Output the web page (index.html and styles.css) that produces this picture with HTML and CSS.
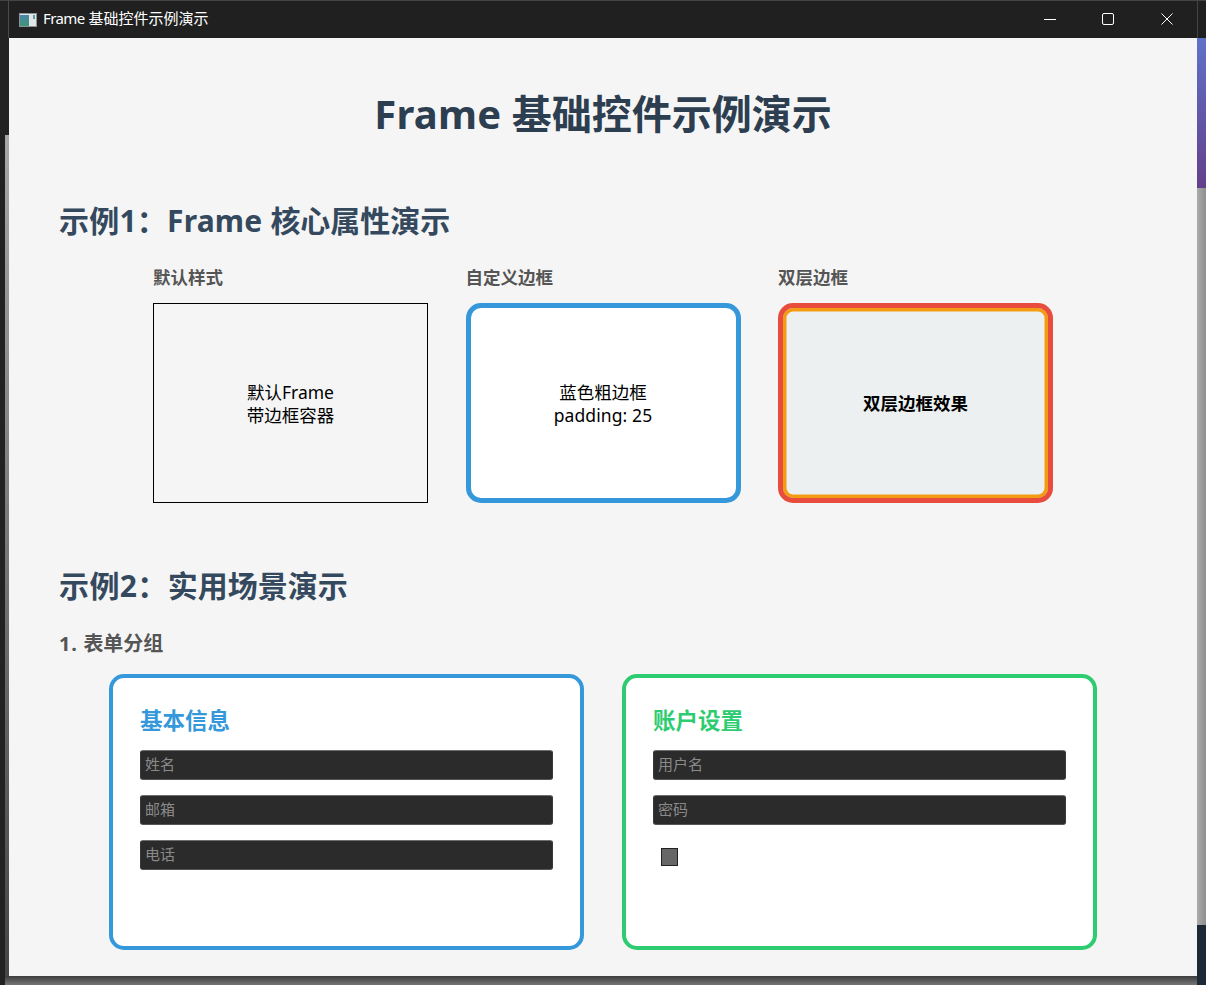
FILE: index.html
```html
<!DOCTYPE html>
<html lang="zh-CN">
<head>
<meta charset="utf-8">
<title>Frame 基础控件示例演示</title>
<link rel="stylesheet" href="styles.css">
</head>
<body>
<div class="window">
  <header class="titlebar">
    <svg class="app-icon" width="18" height="14" viewBox="0 0 18 14">
      <defs>
        <linearGradient id="appfill" x1="0" y1="0" x2="0" y2="1">
          <stop offset="0" stop-color="#4a86a8"/>
          <stop offset="1" stop-color="#3f9478"/>
        </linearGradient>
      </defs>
      <rect x="0.5" y="0.5" width="17" height="13" fill="#e2e6e8" stroke="#8d9296"/>
      <rect x="1" y="2" width="9" height="11" fill="url(#appfill)"/>
      <rect x="14" y="2" width="2" height="4" fill="#5f9ea0"/>
    </svg>
    <span class="title-text"><span class="tight">Frame</span> 基础控件示例演示</span>
    <div class="win-controls">
      <span class="win-btn"><svg width="12" height="12" viewBox="0 0 12 12"><path d="M0 6.5H12" stroke="#fff" fill="none"/></svg></span>
      <span class="win-btn nudge-btn"><svg width="12" height="12" viewBox="0 0 12 12"><rect x="0.5" y="0.5" width="11" height="11" rx="1.5" stroke="#fff" fill="none"/></svg></span>
      <span class="win-btn nudge-btn"><svg width="12" height="12" viewBox="0 0 12 12"><path d="M0.5 0.5L11.5 11.5M11.5 0.5L0.5 11.5" stroke="#fff" fill="none"/></svg></span>
    </div>
  </header>
  <main class="content">
    <h1 class="page-title"><span class="wide-2">Frame</span> 基础控件示例演示</h1>

    <h2 class="section-title first"><span class="wide-2">示例1：Frame </span>核心属性演示</h2>
    <div class="demo-row">
      <div class="demo-col">
        <div class="demo-label">默认样式</div>
        <div class="frame frame-default"><span class="frame-text">默认Frame<br>带边框容器</span></div>
      </div>
      <div class="demo-col">
        <div class="demo-label">自定义边框</div>
        <div class="frame frame-blue"><span class="frame-text">蓝色粗边框<br><span class="wide-1">padding: 25</span></span></div>
      </div>
      <div class="demo-col">
        <div class="demo-label">双层边框</div>
        <div class="frame frame-double">双层边框效果</div>
      </div>
    </div>

    <h2 class="section-title second"><span class="wide-4">示例2：</span>实用场景演示</h2>
    <h3 class="sub-title"><span class="wide-7">1. </span>表单分组</h3>
    <div class="form-row">
      <section class="form-card card-blue">
        <h4 class="card-title">基本信息</h4>
        <input class="field" placeholder="姓名">
        <input class="field" placeholder="邮箱">
        <input class="field" placeholder="电话">
      </section>
      <section class="form-card card-green">
        <h4 class="card-title">账户设置</h4>
        <input class="field" placeholder="用户名">
        <input class="field" placeholder="密码">
        <input class="check" type="checkbox">
      </section>
    </div>
  </main>
</div>
</body>
</html>
```
FILE: styles.css
```css
* { box-sizing: border-box; }
html, body { margin: 0; height: 985px; overflow: hidden; }
body {
  width: 1206px;
  padding: 1px 9px 9px 9px;
  font-family: "Noto Sans", "Noto Sans CJK SC", sans-serif;
  background:
    linear-gradient(#444, #444) 0 0 / 100% 1px no-repeat,
    linear-gradient(#4a4a4a, #4a4a4a) 8px 0 / 1px 38px no-repeat,
    linear-gradient(#444, #444) 1197px 0 / 1px 38px no-repeat,
    linear-gradient(180deg, #5f72c8 0, #643f8c 100%) 1197px 38px / 9px 150px no-repeat,
    linear-gradient(#1c2a38, #1c2a38) 1197px 925px / 9px 60px no-repeat,
    linear-gradient(90deg, #ababab, #8e8e8e) 1197px 188px / 9px 737px no-repeat,
    linear-gradient(#202020, #202020) 1197px 0 / 9px 38px no-repeat,
    linear-gradient(180deg, #3c3c3c, #767676) 5px 976px / 100% 9px no-repeat,
    linear-gradient(#a8a8a8, #444) 5px 135px / 4px 850px no-repeat,
    #222;
}
.window {
  width: 1188px;
  height: 975px;
  background: #f5f5f5;
  overflow: hidden;
}
.titlebar {
  height: 37px;
  background: #202020;
  display: flex;
  align-items: center;
  padding-left: 10px;
  color: #fff;
}
.app-icon { flex: none; }
.title-text { margin-left: 6px; margin-bottom: 3px; font-size: 15px; line-height: 20px; }
.tight { letter-spacing: -0.6px; }
.wide-1 { letter-spacing: 0.1px; }
.wide-2 { letter-spacing: 0.2px; }
.wide-4 { letter-spacing: 0.4px; }
.wide-7 { letter-spacing: 0.7px; }
.win-controls { margin-left: auto; display: flex; }
.win-btn { width: 59px; height: 37px; padding-bottom: 2px; display: flex; align-items: center; justify-content: center; }
.nudge-btn { padding-right: 1px; }
.content { padding: 0 50px; }
.page-title {
  margin: 49px 0 0;
  text-align: center;
  font-size: 40px;
  line-height: 54px;
  font-weight: 700;
  color: #2c3e50;
}
.section-title {
  margin: 0;
  font-size: 30px;
  line-height: 40px;
  font-weight: 700;
  color: #34495e;
}
.section-title.first { margin-top: 60px; }
.section-title.second { margin-top: 63px; }
.demo-row { display: flex; justify-content: center; gap: 37.5px; margin-top: 24px; }
.demo-col { width: 275px; }
.demo-label {
  font-size: 17.5px;
  line-height: 24px;
  font-weight: 700;
  color: #555;
  margin-bottom: 14px;
}
.frame {
  height: 200px;
  display: flex;
  align-items: center;
  justify-content: center;
  text-align: center;
  font-size: 17.5px;
  line-height: 23px;
  color: #000;
}
.frame-text { padding-top: 2px; }
.frame-default { border: 1px solid #000; background: transparent; }
.frame-blue { border: 5px solid #3498db; border-radius: 15px; background: #fff; }
.frame-double {
  border: 5px solid #e74c3c;
  border-radius: 15px;
  background: #ecf0f1;
  font-weight: 700;
  box-shadow: inset 0 0 0 3.5px #f39c12;
}
.sub-title {
  margin: 24px 0 0;
  font-size: 20px;
  line-height: 27px;
  font-weight: 700;
  color: #555;
}
.form-row { display: flex; justify-content: center; gap: 38px; margin-top: 17px; }
.form-card {
  width: 475px;
  height: 276px;
  flex: none;
  background: #fff;
  border: 4px solid;
  border-radius: 15px;
  padding: 28px 27px 0;
  display: flex;
  flex-direction: column;
  align-items: flex-start;
}
.card-blue { border-color: #3498db; }
.card-green { border-color: #2ecc71; }
.card-title {
  margin: 0 0 14px;
  font-size: 22.5px;
  line-height: 30px;
  font-weight: 700;
}
.card-blue .card-title { color: #3498db; }
.card-green .card-title { color: #2ecc71; }
.field {
  display: block;
  width: 413px;
  height: 30px;
  flex: none;
  margin: 0 0 15px;
  padding: 0 4px 2px;
  border: 1px solid #3a3a3a;
  border-top-color: #6e6e6e;
  border-bottom-color: #555;
  border-radius: 3px;
  background: #2b2b2b;
  color: #fff;
  font: 15px "Noto Sans", "Noto Sans CJK SC", sans-serif;
  outline: none;
}
.field::placeholder { color: #8a8a8a; opacity: 1; }
.check {
  appearance: none;
  width: 17px;
  height: 18px;
  margin: 8px 0 0 8px;
  background: #666;
  border: 1px solid #222;
}
```
